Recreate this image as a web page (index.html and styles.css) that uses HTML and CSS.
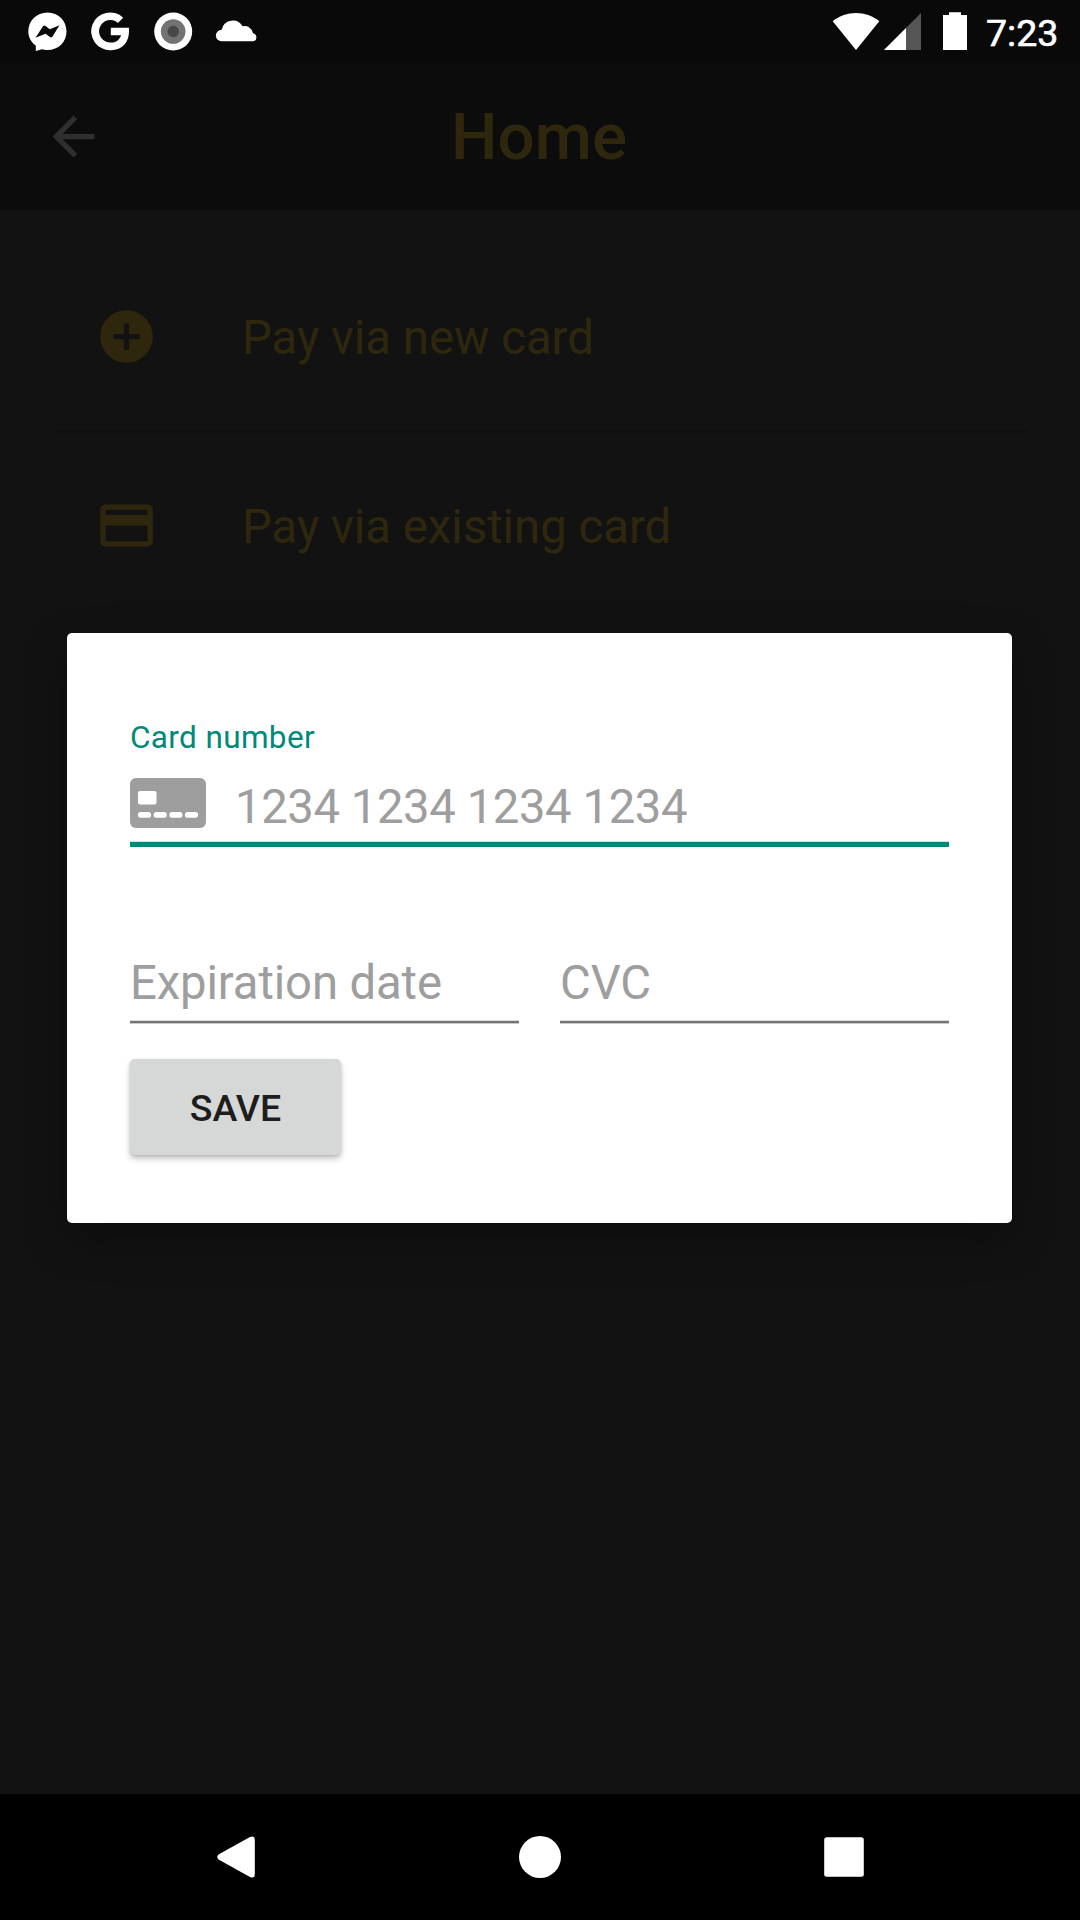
FILE: index.html
```html
<!DOCTYPE html>
<html lang="en">
<head>
<meta charset="utf-8">
<title>Home</title>
<link rel="stylesheet" href="styles.css">
</head>
<body>
<div class="screen">
  <header class="status">
    <svg class="notifications" width="270" height="63" viewBox="0 0 270 63" fill="#fff">
      <path fill-rule="evenodd" d="M47.500 12.500C58.500 12.500 66.500 21 66.500 31.500S58.500 50 47.500 50C45.500 50 43.500 49.700 42 49.200L35.800 51V45.500C31 42.300 28.300 37 28.300 31.500C28.300 21 36.500 12.500 47.500 12.500ZM35.500 37.800L43 26.300Q44 25 45.500 26L49.800 29.200L59.500 25.300L52.500 36.500Q51.500 38 50 37L45.500 33.700Z"/>
      <path d="M123.200 17.700A18.900 18.900 0 1 0 111 50.200C122.500 50.200 129 42 129 31.500V27.700H110.800V35.200H121C119.800 39.800 116 42.600 111 42.600A11.300 11.300 0 1 1 117.900 22.900Z"/>
      <circle cx="173.200" cy="31.500" r="19"/>
      <circle cx="173.200" cy="31.500" r="12.300" fill="#737373"/>
      <circle cx="173.200" cy="31.500" r="5.700" fill="#484848"/>
      <path d="M221.500 41.300A5.700 5.700 0 0 1 221.700 29.800A11.200 11.200 0 0 1 242.500 26.300A8.500 8.500 0 0 1 253 33.200A4.100 4.100 0 0 1 253 41.300Z"/>
    </svg>
    <svg class="indicators" width="140" height="63" viewBox="830 0 140 63" fill="#fff">
      <path d="M856 50L832.700 21.300C846 10.300 866 10.300 879.300 21.300Z"/>
      <path fill="#555" d="M884 50L921 13V50Z"/>
      <path d="M884 50L906 28V50Z"/>
      <path d="M943 50V15H949V12.200H961V15H967V50Z"/>
    </svg>
    <span class="clock">7:23</span>
  </header>
  <div class="appbar">
    <svg class="back" width="63" height="63" viewBox="0 0 24 24" fill="#2f2f2f"><path d="M20 11H7.830l5.590-5.590L12 4l-8 8 8 8 1.410-1.410L7.830 13H20v-2z"/></svg>
    <h1 class="title">Home</h1>
  </div>
  <main class="list">
    <div class="tile">
      <svg width="63" height="63" viewBox="0 0 24 24"><path d="M12 2C6.480 2 2 6.480 2 12s4.480 10 10 10 10-4.480 10-10S17.520 2 12 2zm5 11h-4v4h-2v-4H7v-2h4V7h2v4h4v2z"/></svg>
      <span class="tile-label">Pay via new card</span>
    </div>
    <div class="divider"></div>
    <div class="tile">
      <svg width="63" height="63" viewBox="0 0 24 24"><path d="M20 4H4c-1.110 0-1.990.890-1.990 2L2 18c0 1.110.890 2 2 2h16c1.110 0 2-.890 2-2V6c0-1.110-.890-2-2-2zm0 14H4v-6h16v6zm0-10H4V6h16v2z"/></svg>
      <span class="tile-label">Pay via existing card</span>
    </div>
  </main>
  <section class="dialog">
    <div class="label">Card number</div>
    <div class="field focused">
      <svg class="card" width="76" height="50" viewBox="0 0 76 50"><rect width="76" height="50" rx="6" fill="#9e9e9e"/><g fill="#fff"><rect x="8" y="13" width="18.500" height="13.500" rx="2"/><rect x="8" y="34" width="13" height="5.700" rx="2.500"/><rect x="23.700" y="34" width="13" height="5.700" rx="2.500"/><rect x="39.400" y="34" width="13" height="5.700" rx="2.500"/><rect x="55" y="34" width="13" height="5.700" rx="2.500"/></g></svg>
      <span>1234 1234 1234 1234</span>
    </div>
    <div class="pair">
      <div class="field">Expiration date</div>
      <div class="field">CVC</div>
    </div>
    <button class="save">SAVE</button>
  </section>
  <nav class="navbar">
    <svg width="1080" height="126" viewBox="0 0 1080 126" fill="#fff">
      <path d="M218.500 60.500L250 43Q254.800 41 254.800 46V80Q254.800 85 250 83L218.500 65.500Q216 63 218.500 60.500Z"/>
      <circle cx="540" cy="63" r="21"/>
      <rect x="824.200" y="43.200" width="39.600" height="39.600" rx="2.500"/>
    </svg>
  </nav>
</div>
</body>
</html>
```
FILE: styles.css
```css
* { box-sizing: border-box; }
body { margin: 0; background: #121212; font-family: Roboto, "Liberation Sans", sans-serif; }
.screen { position: relative; display: flex; flex-direction: column; width: 1080px; height: 1920px; overflow: hidden; background: #121212; }
.screen svg { display: block; flex: none; }
.status { display: flex; height: 63px; background: #090909; color: #fff; }
.indicators { margin-left: auto; }
.clock { width: 94px; margin-right: 16px; padding-left: 16px; font-size: 37.500px; font-weight: 400; -webkit-text-stroke: .6px #fff; line-height: 66px; white-space: nowrap; }
.appbar { display: grid; grid-template-columns: 126px 1fr 126px; align-items: center; height: 147px; background: #0c0c0c; }
.back { margin-left: 42px; }
.title { margin: 0; padding-right: 2px; text-align: center; font-size: 65.600px; font-weight: 500; line-height: 147px; color: #2f270d; }
.list { flex: 1; padding: 52.500px; }
.tile { display: flex; align-items: center; gap: 84.500px; height: 147px; padding: 0 42px; font-size: 47.250px; color: #2f270d; }
.tile svg { fill: #2f270d; }
.tile-label { padding-top: 3px; }
.divider { display: flex; align-items: center; height: 42px; padding: 1px 0 0 1px; }
.divider::before { content: ""; flex: 1; height: 3px; background: #0f0f0f; }
.dialog { position: absolute; left: 67px; top: 633px; width: 945px; height: 590px; padding: 85px 63px 0; border-radius: 5px; background: #fff; box-shadow: 0 16px 44px rgba(0, 0, 0, .3); }
.label { padding-top: 1px; height: 38px; font-size: 31.500px; line-height: 38px; letter-spacing: .36px; color: #00897b; }
.field { height: 68px; border-bottom: 2px solid #757575; box-shadow: 0 1px #c8c8c8, inset 0 -1px #ddd; font-size: 47.250px; line-height: 56px; letter-spacing: -.12px; color: #9e9e9e; white-space: nowrap; }
.focused { display: flex; gap: 29px; margin-top: 23px; border-bottom: 5px solid #00897b; box-shadow: inset 0 -1px #cce5e3; letter-spacing: -.42px; }
.card { margin-top: -1px; }
.pair { display: grid; grid-template-columns: 1fr 1fr; gap: 41px; margin-top: 108px; }
.save { display: block; width: 211px; height: 96px; margin-top: 36px; padding: 2px 0 0; border: 0; border-radius: 5px; background: #d6d7d7; color: #1d1d1d; font: 500 37.500px Roboto, sans-serif; box-shadow: 0 4px 6px rgba(0, 0, 0, .22), 0 1px 3px rgba(0, 0, 0, .12); }
.navbar { height: 126px; background: #000; }
```
